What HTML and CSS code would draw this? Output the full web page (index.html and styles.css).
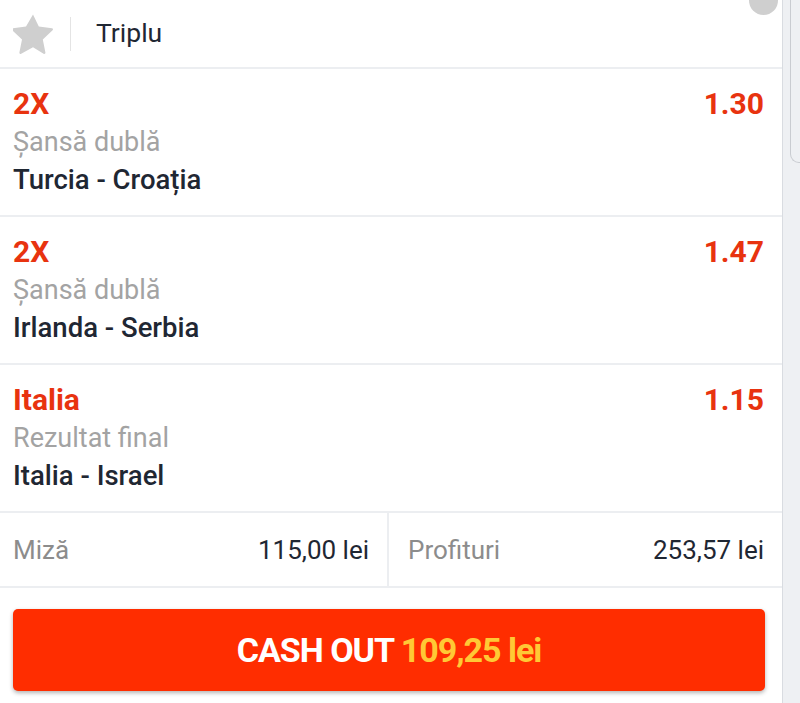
FILE: index.html
```html
<!DOCTYPE html>
<html lang="ro">
<head>
  <meta charset="UTF-8">
  <title>Bilet Triplu</title>
  <link rel="stylesheet" href="styles.css">
</head>
<body>
  <div class="page">
    <div class="ticket">
      <div class="head">
        <svg class="star" viewBox="2 2 20 20" width="40" height="40">
          <path d="M12 2.2l2.9 6.1 6.6.8c.5.1.7.7.3 1l-4.9 4.6 1.3 6.6c.1.5-.4.9-.9.6L12 18.6l-5.9 3.3c-.5.3-1-.1-.9-.6l1.3-6.6-4.9-4.6c-.4-.3-.2-.9.3-1l6.6-.8z" fill="#cfcfcf"/>
        </svg>
        <span class="sep"></span>
        <span class="title">Triplu</span>
        <span class="dot"></span>
      </div>

      <div class="bet">
        <div class="line">
          <span class="pick">2X</span>
          <span class="odd">1.30</span>
        </div>
        <div class="market">Șansă dublă</div>
        <div class="match">Turcia - Croația</div>
      </div>

      <div class="bet">
        <div class="line">
          <span class="pick">2X</span>
          <span class="odd">1.47</span>
        </div>
        <div class="market">Șansă dublă</div>
        <div class="match">Irlanda - Serbia</div>
      </div>

      <div class="bet">
        <div class="line">
          <span class="pick">Italia</span>
          <span class="odd">1.15</span>
        </div>
        <div class="market">Rezultat final</div>
        <div class="match">Italia - Israel</div>
      </div>

      <div class="totals">
        <div class="cell">
          <span class="lbl">Miză</span>
          <span class="val">115,00 lei</span>
        </div>
        <div class="cell">
          <span class="lbl">Profituri</span>
          <span class="val">253,57 lei</span>
        </div>
      </div>

      <div class="actions">
        <button class="cashout">CASH OUT <span class="amount">109,25 lei</span></button>
      </div>
    </div>
    <div class="side">
      <div class="next"></div>
    </div>
  </div>
</body>
</html>
```

FILE: styles.css
```css
* { box-sizing: border-box; }
html, body { margin: 0; padding: 0; background: #eef0f3; }
body { font-family: Roboto, "Liberation Sans", sans-serif; color: #1f2733; }

.page { display: flex; height: 703px; overflow: hidden; }
.ticket { width: 783px; background: #fff; border-right: 1px solid #d9dce1; }
.side { flex: 1; position: relative; }
.next { margin-left: 7px; height: 163px; border: 1px solid #c9ccd1; border-top: 0; border-right: 0; border-bottom-left-radius: 9px; background: #eef0f3; }

.head { position: relative; display: flex; align-items: center; height: 69px; padding-left: 13px; border-bottom: 2px solid #eceef1; }
.star { display: block; }
.sep { width: 1px; height: 34px; background: #e4e4e4; margin: 0 25px 0 17px; }
.title { font-size: 26.5px; color: #1f2733; padding-bottom: 2px; }
.dot { position: absolute; right: 4px; top: -14px; width: 29px; height: 29px; border-radius: 50%; background: #cfcfcf; }

.bet { height: 148px; padding: 16px 18px 0 13px; border-bottom: 2px solid #eceef1; }
.line { display: flex; justify-content: space-between; font-weight: 700; font-size: 30px; line-height: 38px; color: #e8330f; }
.market { font-size: 27px; line-height: 38px; color: #a3a3a3; }
.match { font-size: 27.5px; line-height: 38px; font-weight: 500; color: #1f2733; }

.totals { display: flex; height: 75px; border-bottom: 2px solid #eceef1; }
.cell { flex: 1; display: flex; justify-content: space-between; align-items: center; padding: 0 18px 0 13px; font-size: 26px; }
.cell + .cell { border-left: 2px solid #eceef1; padding-left: 19px; }
.lbl { color: #8c8c8c; }
.val { color: #1f2733; }

.actions { padding: 21px 17px 0 13px; }
.cashout { display: block; width: 100%; height: 82px; border: 0; border-radius: 5px; background: #ff2d00; color: #fff; font-family: Roboto, "Liberation Sans", sans-serif; font-weight: 700; font-size: 34px; letter-spacing: -1px; box-shadow: 0 2px 4px rgba(0,0,0,0.3); }
.amount { color: #ffc935; }
```
